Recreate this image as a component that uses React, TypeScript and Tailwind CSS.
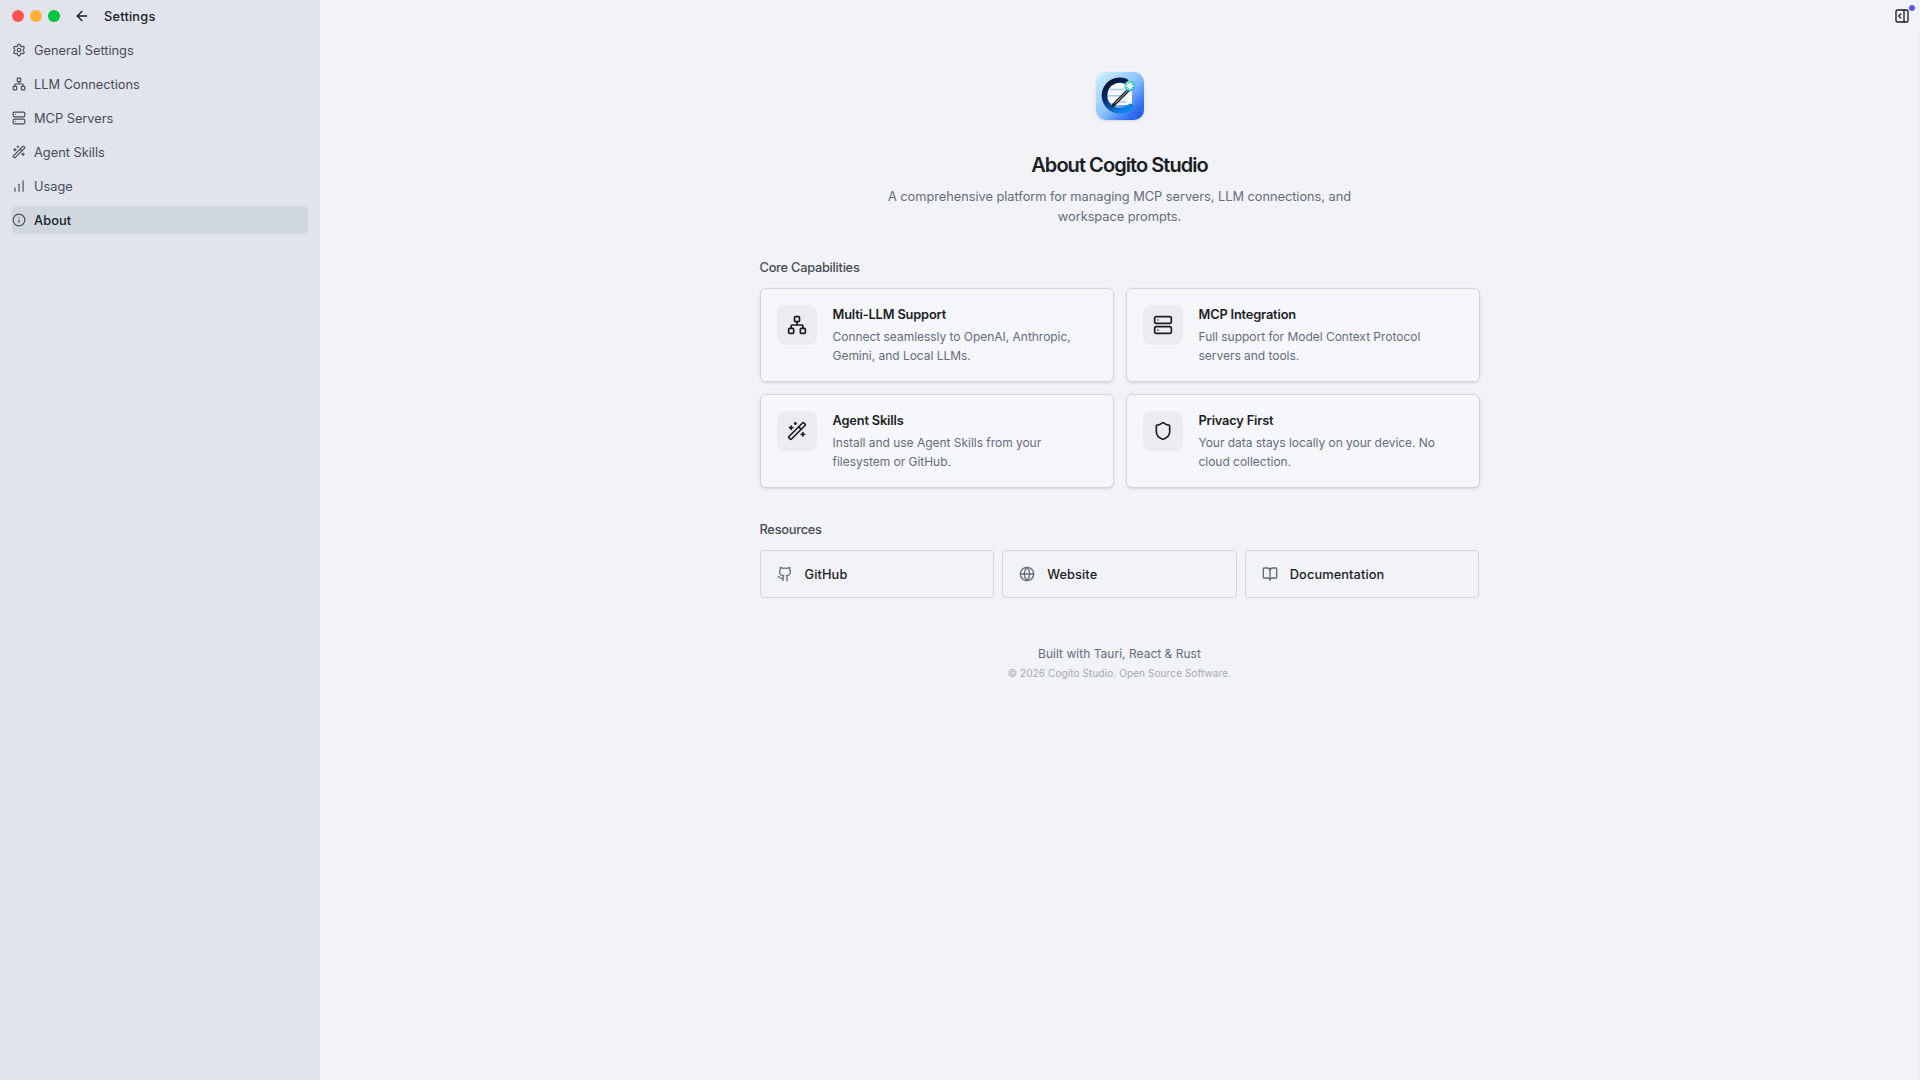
import type { ReactNode } from 'react';
import {
  ArrowLeft,
  BookOpen,
  ChartNoAxesColumnIncreasing,
  Github,
  Globe,
  Info,
  Network,
  PanelRightOpen,
  Server,
  Settings,
  Shield,
  WandSparkles,
  type LucideIcon,
} from 'lucide-react';

interface NavItem {
  label: string;
  icon: LucideIcon;
}

const navItems: NavItem[] = [
  { label: 'General Settings', icon: Settings },
  { label: 'LLM Connections', icon: Network },
  { label: 'MCP Servers', icon: Server },
  { label: 'Agent Skills', icon: WandSparkles },
  { label: 'Usage', icon: ChartNoAxesColumnIncreasing },
  { label: 'About', icon: Info },
];

const capabilities = [
  {
    title: 'Multi-LLM Support',
    description: 'Connect seamlessly to OpenAI, Anthropic, Gemini, and Local LLMs.',
    icon: Network,
  },
  {
    title: 'MCP Integration',
    description: 'Full support for Model Context Protocol servers and tools.',
    icon: Server,
  },
  {
    title: 'Agent Skills',
    description: 'Install and use Agent Skills from your filesystem or GitHub.',
    icon: WandSparkles,
  },
  {
    title: 'Privacy First',
    description: 'Your data stays locally on your device. No cloud collection.',
    icon: Shield,
  },
];

const resources: NavItem[] = [
  { label: 'GitHub', icon: Github },
  { label: 'Website', icon: Globe },
  { label: 'Documentation', icon: BookOpen },
];

function Logo() {
  return (
    <svg viewBox="0 0 48 48" className="size-12 rounded-[10px] shadow-sm">
      <defs>
        <linearGradient id="logo-bg" x1="0" y1="0" x2="1" y2="1">
          <stop offset="0" stopColor="#d3f3ff" />
          <stop offset="0.5" stopColor="#8cc4fb" />
          <stop offset="0.82" stopColor="#2f6df0" />
          <stop offset="1" stopColor="#2458e0" />
        </linearGradient>
        <linearGradient id="logo-ring" x1="0.2" y1="0" x2="0.7" y2="1">
          <stop offset="0" stopColor="#04102f" />
          <stop offset="0.5" stopColor="#07317f" />
          <stop offset="1" stopColor="#0a84e8" />
        </linearGradient>
        <linearGradient id="logo-gem" x1="0" y1="0" x2="1" y2="1">
          <stop offset="0" stopColor="#8fdc9c" />
          <stop offset="0.5" stopColor="#35c9c4" />
          <stop offset="1" stopColor="#3aa6e0" />
        </linearGradient>
      </defs>
      <rect width="48" height="48" fill="url(#logo-bg)" />
      <path d="M12 11h17l7 6v16H20l-8-3z" fill="#f7fbff" />
      <path d="M13.5 17.5h14.5M13 23.7h13M20 30h10" stroke="#9dcdf8" strokeWidth="1.4" fill="none" />
      <path
        d="M29.5 9.3A15.3 15.3 0 1 0 34.5 34.3"
        fill="none"
        stroke="url(#logo-ring)"
        strokeWidth="5.4"
        strokeLinecap="round"
      />
      <path d="M17 33.5L32.5 18" stroke="#20242c" strokeWidth="3.2" />
      <path d="M19 31.5L32 18.5" stroke="#c9ced6" strokeWidth="0.9" />
      <path d="M15.2 35.4l1-3.6 2.6 2.4z" fill="#20242c" />
      <circle cx="33.8" cy="14" r="5.4" fill="url(#logo-gem)" />
      <path
        d="M33.8 10v8M29.8 14h8M31.2 11.4l5.2 5.2M36.4 11.4l-5.2 5.2"
        stroke="#f2fffb"
        strokeWidth="1.3"
      />
    </svg>
  );
}

function Sidebar() {
  return (
    <aside className="w-80 shrink-0 bg-[#e1e4ed]">
      <div className="flex h-8 items-center pl-3">
        <div className="flex gap-1.5">
          <span className="size-3 rounded-full bg-[#ff544d]" />
          <span className="size-3 rounded-full bg-[#ffb336]" />
          <span className="size-3 rounded-full bg-[#00c543]" />
        </div>
        <button className="ml-3.5 flex size-4 items-center justify-center text-[#1b1d24]" title="Back">
          <ArrowLeft size={16} />
        </button>
        <h2 className="ml-3.5 pt-0.5 font-medium tracking-[0.2px] text-[#1b1d24]">Settings</h2>
      </div>
      <nav className="flex flex-col gap-1.5 px-3 pt-1">
        {navItems.map(({ label, icon: Icon }) => (
          <button
            key={label}
            className={
              label === 'About'
                ? 'flex h-7 items-center gap-2 rounded bg-[#d0d7e1] font-medium tracking-[0.1px] text-[#1b1d24]'
                : 'flex h-7 items-center gap-2 rounded text-[#474b55]'
            }
          >
            <Icon size={14} className="text-[#474b55]" />
            <span className="pt-0.5">{label}</span>
          </button>
        ))}
      </nav>
    </aside>
  );
}

function Section({ title, className, children }: { title: string; className: string; children: ReactNode }) {
  return (
    <section className={className}>
      <h2 className="mb-2.5 leading-5 font-medium tracking-[-0.25px] text-[#474b55]">{title}</h2>
      {children}
    </section>
  );
}

export default function App() {
  return (
    <div className="flex h-screen overflow-hidden bg-[#f1f3f7] font-['Inter','Liberation_Sans',sans-serif] text-[12.8px]">
      <Sidebar />
      <main className="flex flex-1 flex-col">
        <header className="flex h-8 shrink-0 items-center justify-end pr-2.5">
          <button className="relative text-[#1b1d24]" title="Toggle panel">
            <PanelRightOpen size={16} />
            <span className="absolute -top-[3px] -right-[5px] size-1.5 rounded-full bg-[#5558ee]" />
          </button>
        </header>
        <div className="flex flex-1 justify-center border-r border-[#e6e8ef] pt-10">
          <div className="w-[720px]">
            <div className="flex flex-col items-center text-center">
              <Logo />
              <h1 className="mt-[31px] text-xl leading-7 font-semibold tracking-[-0.95px] text-[#1b1d24]">
                About Cogito Studio
              </h1>
              <p className="mt-2 w-[480px] leading-5 tracking-[-0.03px] text-[#656c7b]">
                A comprehensive platform for managing MCP servers, LLM connections, and workspace prompts.
              </p>
            </div>

            <Section title="Core Capabilities" className="mt-[31px]">
              <div className="grid grid-cols-2 gap-3">
                {capabilities.map(({ title, description, icon: Icon }) => (
                  <div
                    key={title}
                    className="flex gap-4 rounded-md border border-[#d1d4de] bg-[#f6f7fb] p-4 shadow-sm"
                  >
                    <div className="flex size-10 shrink-0 items-center justify-center rounded-lg bg-[#ebecf0] text-[#1b1d24]">
                      <Icon size={20} />
                    </div>
                    <div>
                      <h3 className="leading-[19px] font-semibold tracking-[-0.16px] text-[#1b1d24]">{title}</h3>
                      <p className="mt-[3px] text-xs leading-[19px] tracking-[-0.03px] text-[#656c7b]">
                        {description}
                      </p>
                    </div>
                  </div>
                ))}
              </div>
            </Section>

            <Section title="Resources" className="mt-8">
              <div className="grid grid-cols-3 gap-2 pr-[0.1px]">
                {resources.map(({ label, icon: Icon }) => (
                  <a
                    key={label}
                    href="#"
                    className="flex h-12 items-center gap-3 rounded border border-[#d3d5dc] px-4 font-medium tracking-[0.1px] text-[#1b1d24]"
                  >
                    <Icon size={16} className="text-[#656c7b]" />
                    <span className="pt-0.5">{label}</span>
                  </a>
                ))}
              </div>
            </Section>

            <footer className="mt-[46px] text-center">
              <p className="text-xs leading-5 tracking-[0.02px] text-[#656c7b]">Built with Tauri, React &amp; Rust</p>
              <p className="text-[10px] leading-[18px] tracking-[0.1px] text-[#a4a8b1]">
                © 2026 Cogito Studio. Open Source Software.
              </p>
            </footer>
          </div>
        </div>
      </main>
    </div>
  );
}
